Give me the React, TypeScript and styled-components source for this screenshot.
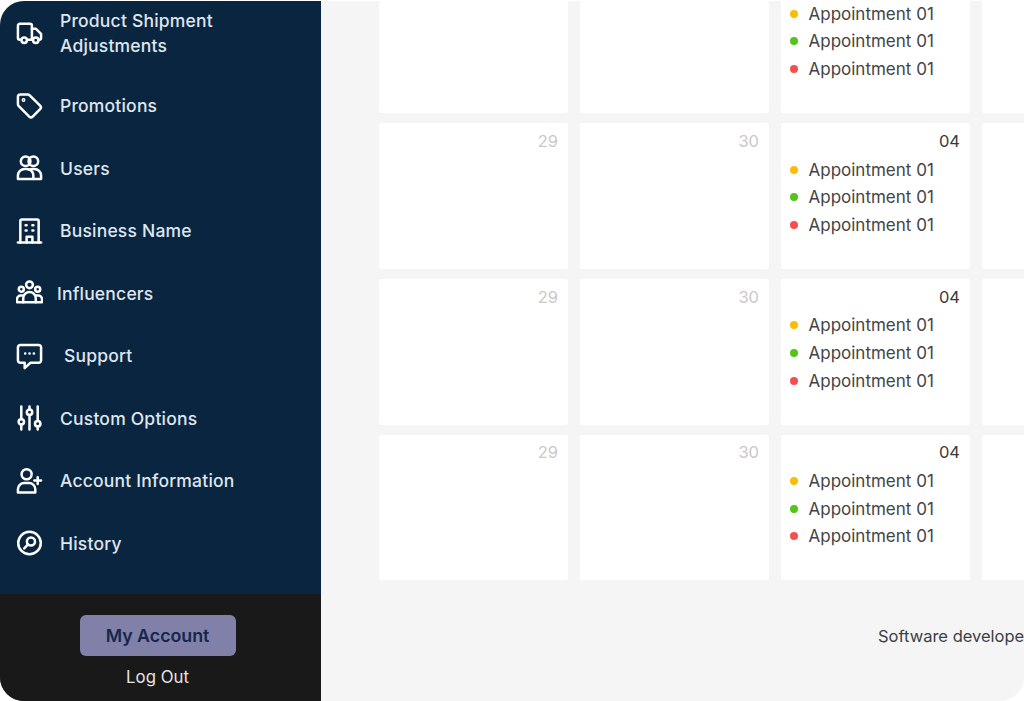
import React from 'react';
import styled, { createGlobalStyle } from 'styled-components';

const GlobalStyle = createGlobalStyle`
  html, body {
    margin: 0;
    padding: 0;
    background: #fff;
    font-family: Inter, "Liberation Sans", sans-serif;
  }
`;

const strokeProps = {
  width: 28,
  height: 28,
  viewBox: '0 0 28 28',
  fill: 'none',
  stroke: 'currentColor',
  strokeWidth: 2.6,
  strokeLinecap: 'round' as const,
  strokeLinejoin: 'round' as const,
};

const TruckIcon = () => (
  <svg {...strokeProps}>
    <path d="M5.500 21H4A2 2 0 0 1 2 19V6.500A2 2 0 0 1 4 4.500H14.500A2 2 0 0 1 16.500 6.500V21H11.500" />
    <path d="M16.500 9.500H20.500L26 15V19A2 2 0 0 1 24 21H23.500" />
    <circle cx="8.500" cy="21.500" r="2.800" />
    <circle cx="20.500" cy="21.500" r="2.800" />
  </svg>
);

const TagIcon = () => (
  <svg {...strokeProps}>
    <path d="M4.500 2H12A3 3 0 0 1 14.200 2.900L25 13.700A2.600 2.600 0 0 1 25 17.300L17.300 25A2.600 2.600 0 0 1 13.700 25L2.900 14.200A3 3 0 0 1 2 12V4.500A2.500 2.500 0 0 1 4.500 2Z" />
    <circle cx="7.800" cy="7.800" r="0.700" />
  </svg>
);

const UsersIcon = () => (
  <svg {...strokeProps}>
    <circle cx="10" cy="7" r="5" />
    <circle cx="18" cy="7" r="5" />
    <path d="M2 25.500V22A7 7 0 0 1 9 15H11A7 7 0 0 1 14 15.800A7 7 0 0 1 17 15H19A7 7 0 0 1 26 22V25.500Z" />
    <path d="M14 15.800A7 7 0 0 1 18 22V25.500" />
  </svg>
);

const BuildingIcon = () => (
  <svg {...strokeProps}>
    <path d="M2 26H26" />
    <path d="M4.500 26V3.500A1.500 1.500 0 0 1 6 2H22A1.500 1.500 0 0 1 23.500 3.500V26" />
    <path d="M11 26V20H17V26" />
    <path d="M10 8H11M17 8H18M10 13.500H11M17 13.500H18" />
  </svg>
);

const GroupIcon = () => (
  <svg {...strokeProps}>
    <circle cx="14" cy="5.500" r="3.500" />
    <circle cx="5.500" cy="10" r="2.600" />
    <circle cx="22.500" cy="10" r="2.600" />
    <path d="M7.500 23.500V19.500A6.500 6.500 0 0 1 20.500 19.500V23.500Z" />
    <path d="M7.500 23.500H1V20.500A4 4 0 0 1 5 16.500H7M20.500 23.500H27V20.500A4 4 0 0 0 23 16.500H21" />
  </svg>
);

const ChatIcon = () => (
  <svg {...strokeProps}>
    <path d="M4.500 2.500H23.500A2.500 2.500 0 0 1 26 5V18.500A2.500 2.500 0 0 1 23.500 21H15L9 26.500V21H4.500A2.500 2.500 0 0 1 2 18.500V5A2.500 2.500 0 0 1 4.500 2.500Z" />
    <path d="M9.500 11.500H9.600M14 11.500H14.100M18.500 11.500H18.600" />
  </svg>
);

const SlidersIcon = () => (
  <svg {...strokeProps}>
    <path d="M5.500 2V15M5.500 21V26M14 2V5M14 11V26M22.500 2V17M22.500 23V26" />
    <circle cx="5.500" cy="18" r="2.800" />
    <circle cx="14" cy="8" r="2.800" />
    <circle cx="22.500" cy="20" r="2.800" />
  </svg>
);

const UserPlusIcon = () => (
  <svg {...strokeProps}>
    <circle cx="11" cy="7" r="5.200" />
    <path d="M2 26V22.500A6.500 6.500 0 0 1 8.500 16H13.500A6.500 6.500 0 0 1 20 22.500V26Z" />
    <path d="M22.500 10V17M19 13.500H26" />
  </svg>
);

const HistoryIcon = () => (
  <svg {...strokeProps}>
    <circle cx="14" cy="14" r="11.700" />
    <circle cx="15.500" cy="12.500" r="4.200" />
    <path d="M12.500 15.500L8.500 19.500" />
  </svg>
);

type NavEntry = {
  label: React.ReactNode;
  icon: React.ReactNode;
  gap: number;
  tall?: boolean;
};

const navItems: NavEntry[] = [
  { label: <>Product Shipment<br />Adjustments</>, icon: <TruckIcon />, gap: 17, tall: true },
  { label: 'Promotions', icon: <TagIcon />, gap: 17 },
  { label: 'Users', icon: <UsersIcon />, gap: 17 },
  { label: 'Business Name', icon: <BuildingIcon />, gap: 17 },
  { label: 'Influencers', icon: <GroupIcon />, gap: 14 },
  { label: 'Support', icon: <ChatIcon />, gap: 21 },
  { label: 'Custom Options', icon: <SlidersIcon />, gap: 17 },
  { label: 'Account Information', icon: <UserPlusIcon />, gap: 17 },
  { label: 'History', icon: <HistoryIcon />, gap: 17 },
];

const Frame = styled.div`
  width: 1024px;
  height: 700px;
  margin-top: 1px;
  display: flex;
  overflow: hidden;
  border-radius: 24px;
  background: #f5f5f5;
`;

const Sidebar = styled.aside`
  width: 321px;
  flex: none;
  display: flex;
  flex-direction: column;
  background: #0a2540;
  overflow: hidden;
`;

const NavList = styled.nav`
  height: 593px;
  flex: none;
  padding: 6.500px 0 0 16px;
  box-sizing: border-box;
`;

const NavRow = styled.div<{ $gap: number; $tall?: boolean }>`
  display: flex;
  align-items: center;
  gap: ${(p) => p.$gap}px;
  height: ${(p) => (p.$tall ? 50 : 62.5)}px;
  margin-bottom: ${(p) => (p.$tall ? 17 : 0)}px;
  color: #fff;
`;

const NavIcon = styled.span`
  width: 27px;
  height: 28px;
  flex: none;
  display: flex;
  align-items: center;
  justify-content: center;
`;

const NavLabel = styled.span`
  font-size: 17.500px;
  font-weight: 500;
  letter-spacing: 0.2px;
  line-height: 25px;
  color: #dfe6ee;
  white-space: nowrap;
`;

const SideFooter = styled.div`
  flex: 1;
  background: #191919;
  display: flex;
  flex-direction: column;
  align-items: center;
  padding: 21px 6px 0 0;
`;

const AccountButton = styled.button`
  width: 156px;
  height: 41px;
  border: none;
  border-radius: 6px;
  background: #8080a8;
  color: #17264f;
  font: 600 17.800px Inter, "Liberation Sans", sans-serif;
`;

const LogOut = styled.a`
  margin-top: 11px;
  font-size: 16.800px;
  line-height: 20px;
  color: #e4e4e4;
`;

const Main = styled.main`
  flex: 1;
  min-width: 0;
  display: flex;
  flex-direction: column;
  overflow: hidden;
`;

const Calendar = styled.div`
  display: grid;
  grid-template-columns: repeat(4, 189px);
  grid-auto-rows: 145.500px;
  column-gap: 12px;
  row-gap: 10.300px;
  margin: -33.500px 0 0 58px;
`;

const Cell = styled.div`
  background: #fff;
  border-radius: 2px;
  padding: 7.500px 10px 0 9px;
  box-sizing: border-box;
`;

const DayNumber = styled.div<{ $muted?: boolean }>`
  text-align: right;
  font-size: 16.500px;
  line-height: 20px;
  min-height: 20px;
  color: ${(p) => (p.$muted ? '#c9c9c9' : '#3a3a3a')};
`;

const Appointment = styled.div`
  display: flex;
  align-items: center;
  gap: 10.500px;
  height: 27.600px;
  font-size: 17px;
  color: #444;
  white-space: nowrap;
`;

const Dot = styled.span<{ $color: string }>`
  width: 8px;
  height: 8px;
  border-radius: 50%;
  flex: none;
  background: ${(p) => p.$color};
`;

const AppointmentList = styled.div`
  margin-top: 5px;
`;

const FooterNote = styled.div`
  margin: 45.500px 0 0 557px;
  font-size: 16.500px;
  line-height: 20px;
  color: #3c3f45;
  white-space: nowrap;
`;

const dots = ['#fbbc05', '#52c41a', '#f5504e'];

const dayCell = (day: string, muted: boolean, withItems: boolean, key: string) => (
  <Cell key={key}>
    <DayNumber $muted={muted}>{day}</DayNumber>
    {withItems && (
      <AppointmentList>
        {dots.map((c) => (
          <Appointment key={c}>
            <Dot $color={c} />
            Appointment 01
          </Appointment>
        ))}
      </AppointmentList>
    )}
  </Cell>
);

export default function App() {
  return (
    <>
      <GlobalStyle />
      <Frame>
        <Sidebar>
          <NavList>
            {navItems.map((item, i) => (
              <NavRow key={i} $gap={item.gap} $tall={item.tall}>
                <NavIcon>{item.icon}</NavIcon>
                <NavLabel>{item.label}</NavLabel>
              </NavRow>
            ))}
          </NavList>
          <SideFooter>
            <AccountButton>My Account</AccountButton>
            <LogOut>Log Out</LogOut>
          </SideFooter>
        </Sidebar>
        <Main>
          <Calendar>
            {[0, 1, 2, 3].map((row) => (
              <React.Fragment key={row}>
                {/* first row is scrolled past its day numbers */}
                {dayCell(row ? '29' : '', true, false, `${row}-a`)}
                {dayCell(row ? '30' : '', true, false, `${row}-b`)}
                {dayCell(row ? '04' : '', false, true, `${row}-c`)}
                {dayCell('', false, false, `${row}-d`)}
              </React.Fragment>
            ))}
          </Calendar>
          <FooterNote>Software developer</FooterNote>
        </Main>
      </Frame>
    </>
  );
}
